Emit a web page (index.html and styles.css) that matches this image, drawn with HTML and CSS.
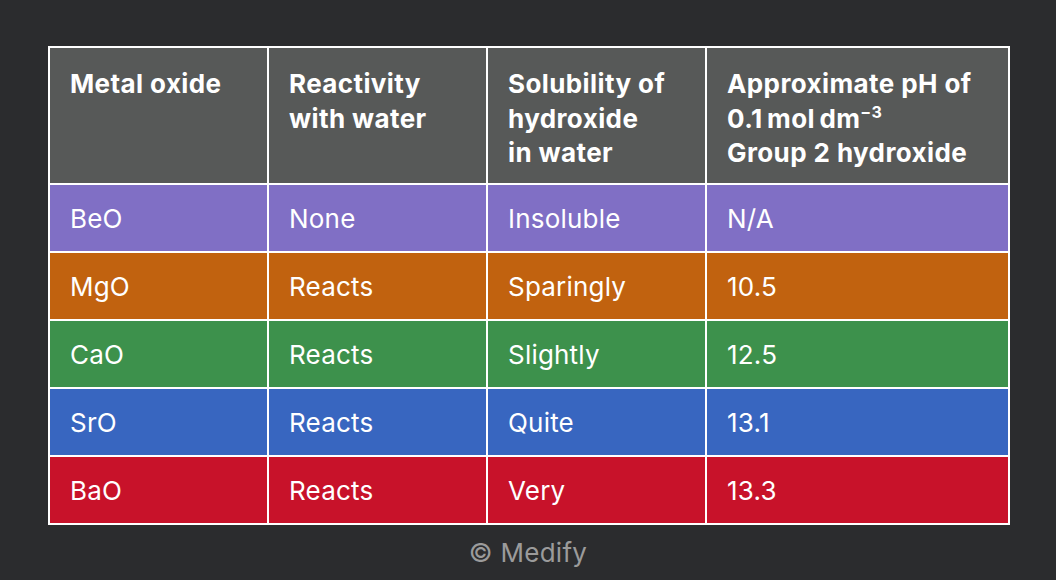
FILE: index.html
```html
<!DOCTYPE html>
<html lang="en">
<head>
<meta charset="utf-8">
<title>Group 2 metal oxides</title>
<link rel="stylesheet" href="styles.css">
</head>
<body>
<main class="page">
  <table class="oxides">
    <thead>
      <tr class="head">
        <th class="c1">Metal oxide</th>
        <th class="c2">Reactivity<br>with water</th>
        <th class="c3">Solubility of<br>hydroxide<br>in water</th>
        <th class="c4">Approximate pH of<br>0.1&#8201;mol&#8201;dm<sup>&minus;3</sup><br>Group 2 hydroxide</th>
      </tr>
    </thead>
    <tbody>
      <tr class="be"><td>BeO</td><td>None</td><td>Insoluble</td><td>N/A</td></tr>
      <tr class="mg"><td>MgO</td><td>Reacts</td><td>Sparingly</td><td>10.5</td></tr>
      <tr class="ca"><td>CaO</td><td>Reacts</td><td>Slightly</td><td>12.5</td></tr>
      <tr class="sr"><td>SrO</td><td>Reacts</td><td>Quite</td><td>13.1</td></tr>
      <tr class="ba"><td>BaO</td><td>Reacts</td><td>Very</td><td>13.3</td></tr>
    </tbody>
  </table>
  <p class="credit">&copy; Medify</p>
</main>
</body>
</html>
```

FILE: styles.css
```css
html, body {
  margin: 0;
  padding: 0;
  background: #2b2c2e;
}
body {
  font-family: Inter, "Liberation Sans", Arial, sans-serif;
  color: #ffffff;
  width: 1056px;
  height: 580px;
  overflow: hidden;
}
.page {
  padding: 46px 0 0 48px;
}
.oxides {
  border-collapse: collapse;
  border: 2px solid #ffffff;
  width: 962px;
  table-layout: fixed;
}
.oxides th,
.oxides td {
  border: 2px solid #ffffff;
  padding: 0 0 0 20px;
  text-align: left;
  font-size: 26px;
}
.oxides th {
  background: #575958;
  font-weight: 700;
  vertical-align: top;
  line-height: 34.5px;
  height: 116px;
  padding-top: 19px;
  letter-spacing: 0.4px;
}
.oxides td {
  font-weight: 400;
  height: 65px;
  vertical-align: middle;
  line-height: 30px;
  letter-spacing: 0.2px;
  padding-top: 1px;
}
.c1 { width: 197px; }
.c2 { width: 197px; }
.c3 { width: 197px; }
.c4 { width: auto; }
.oxides sup {
  font-size: 16px;
  line-height: 0;
  vertical-align: 10px;
}
.be td { background: #806fc5; }
.mg td { background: #c1620f; }
.ca td { background: #3d914c; }
.sr td { background: #3866c0; }
.ba td { background: #c8122a; }
.credit {
  margin: 12px 0 0 -48px;
  width: 1056px;
  text-align: center;
  font-size: 26px;
  color: #9b9b9b;
  letter-spacing: 0.3px;
}
```
